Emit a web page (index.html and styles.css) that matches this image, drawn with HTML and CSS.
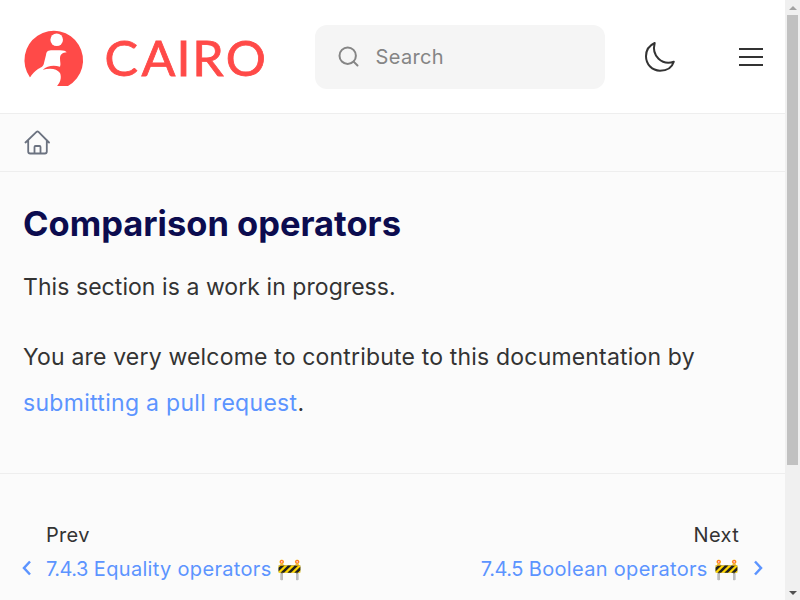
FILE: index.html
```html
<!DOCTYPE html>
<html lang="en">
<head>
<meta charset="utf-8">
<title>Comparison operators</title>
<link rel="stylesheet" href="styles.css">
</head>
<body>
<div class="page">
  <header class="topbar">
    <a class="brand">
      <svg class="mark" viewBox="0 0 60 58" width="60" height="58">
        <path fill="#ff4a48" d="M7 48.500A29.300 29.500 0 1 1 45 57H33.700L30 40L19.700 41Z"/>
        <path fill="#fff" d="M5 50.500L7 48.500C9 45 12 42 15 40C19.500 38 20.500 36.500 21 34L23 26C23.500 23 24 21.500 28 21.200H37C40.500 21.200 43 22 43.700 23.300C39.500 23.500 37 25.500 37 29.500C37 33 38 35 37 37.700C30 35.800 24 37 19.700 41C27 38.500 34 39.700 37 44C39 49 37 54 33.700 57.500V58H5Z"/>
        <circle cx="33.700" cy="10.700" r="6.300" fill="#fff"/>
      </svg>
      <svg class="wordmark" viewBox="0 0 162 48" width="162" height="48">
        <text x="-.5 35 68.500 83.500 115.500" y="43" transform="scale(1.045 1)">CAIRO</text>
      </svg>
    </a>
    <div class="search">
      <svg width="22" height="22" viewBox="0 0 22 22" fill="none" stroke="#858585" stroke-width="2" stroke-linecap="round"><circle cx="9.700" cy="9.700" r="8.200"/><path d="M15.600 15.600L19.500 19.500"/></svg>
      <span>Search</span>
    </div>
    <svg class="moon" width="32" height="32" viewBox="0 0 32 32" fill="none" stroke="#333" stroke-width="2" stroke-linejoin="round"><path d="M10.700 2C5.200 4.500 2 9.500 2 15.300C2 23.500 8.200 29.700 16 29.700C22.500 29.700 28 26.500 29.800 20.700C18 24.500 7.300 15 10.700 2Z"/></svg>
    <div class="burger"><i></i><i></i><i></i></div>
  </header>
  <nav class="crumbs">
    <svg width="26" height="26" viewBox="0 0 26 26" fill="none" stroke="#6b7280" stroke-width="1.800" stroke-linecap="round" stroke-linejoin="round"><path d="M1.500 12.500L12.500 1.900Q13.500 1 14.500 1.900L25 12.500M4.200 10V21.500Q4.200 23.500 6.200 23.500H20.800Q22.800 23.500 22.800 21.500V10M10.500 23V17Q10.500 16 11.500 16H15.500Q16.500 16 16.500 17V23"/></svg>
  </nav>
  <main>
    <h1>Comparison operators</h1>
    <p class="notice">This section is a work in progress.</p>
    <p>You are very welcome to contribute to this documentation by <a>submitting a pull request</a>.</p>
  </main>
  <footer>
    <div class="pager prev">
      <span class="label">Prev</span>
      <svg width="10" height="16" viewBox="0 0 10 16"><path d="M8 1.500L2 8L8 14.500"/></svg>
      <a><span class="num">7.4.3</span> Equality operators 🚧</a>
    </div>
    <div class="pager next">
      <span class="label">Next</span>
      <a><span class="num">7.4.5</span> Boolean operators 🚧</a>
      <svg width="10" height="16" viewBox="0 0 10 16"><path d="M2 1.500L8 8L2 14.500"/></svg>
    </div>
  </footer>
</div>
<aside class="scrollbar">
  <i class="up"></i>
  <div class="thumb"></div>
  <i class="down"></i>
</aside>
</body>
</html>
```
FILE: styles.css
```css
* { box-sizing: border-box; }
body {
  margin: 0;
  width: 800px;
  height: 600px;
  overflow: hidden;
  display: grid;
  grid-template-columns: 785px 15px;
  background: #fbfbfb;
  color: #333;
  font-family: Inter, "Liberation Sans", sans-serif;
  font-weight: 400;
}
.page { height: 600px; overflow: hidden; }
.topbar {
  height: 114px;
  padding: 25px 22px 24px 23px;
  display: flex;
  align-items: center;
  background: #fff;
  border-bottom: 1px solid #eee;
}
.brand { display: flex; align-items: center; width: 292px; height: 64px; }
.mark { flex: none; margin-top: 2px; overflow: visible; }
.wordmark { margin-left: 22px; overflow: visible; }
.wordmark text {
  font-family: Lato, sans-serif;
  font-size: 48px;
  fill: #ff4a48;
  stroke: #ff4a48;
  stroke-width: .8px;
}
.search {
  display: flex;
  align-items: center;
  gap: 15.5px;
  width: 290px;
  height: 64px;
  padding-left: 23px;
  border-radius: 12px;
  background: #f5f5f5;
  color: #858585;
  font-size: 20px;
  letter-spacing: .35px;
}
.moon { margin-left: 39px; }
.burger { margin-left: auto; width: 24px; display: grid; gap: 6px; }
.burger i { height: 2px; background: #333; }
.crumbs {
  height: 58px;
  padding: 16px 24px;
  border-bottom: 1px solid #eee;
}
.crumbs svg { display: block; }
main { height: 302px; padding: 28px 23px 0; border-bottom: 1px solid #eee; }
h1 {
  margin: 0 0 16px;
  font-size: 34.5px;
  line-height: 48px;
  font-weight: 700;
  color: #0c0c4f;
}
p { margin: 0 0 24px; font-size: 23px; line-height: 46px; letter-spacing: .18px; }
.notice { letter-spacing: .06px; }
a { color: #5c94ff; }
p a { letter-spacing: .3px; }
footer {
  display: flex;
  justify-content: space-between;
  padding: 44px 22px 0;
  font-size: 20px;
  line-height: 34px;
  letter-spacing: .32px;
}
.num { letter-spacing: -.5px; }
.pager { display: grid; column-gap: 14px; align-items: center; white-space: nowrap; }
.prev { grid-template-columns: 10px auto; }
.next { grid-template-columns: auto 10px; text-align: right; }
.prev .label { grid-column: 2; }
.next .label { grid-column: 1; }
.prev svg, .prev a { grid-row: 2; }
.next svg, .next a { grid-row: 2; }
.pager svg { margin-top: -2px; }
.pager path { fill: none; stroke: #5c94ff; stroke-width: 2.5; }
.scrollbar {
  display: flex;
  flex-direction: column;
  align-items: center;
  height: 600px;
  padding: 6px 0 5px;
  background: #f0f0f0;
}
.thumb { width: 11px; height: 450px; margin-top: 5px; background: #c1c1c1; }
.up, .down { border: 4px solid transparent; width: 0; height: 0; }
.up { border-top: 0; border-bottom-color: #a3a3a3; }
.down { border-bottom: 0; border-top-color: #505050; margin-top: auto; }
```
